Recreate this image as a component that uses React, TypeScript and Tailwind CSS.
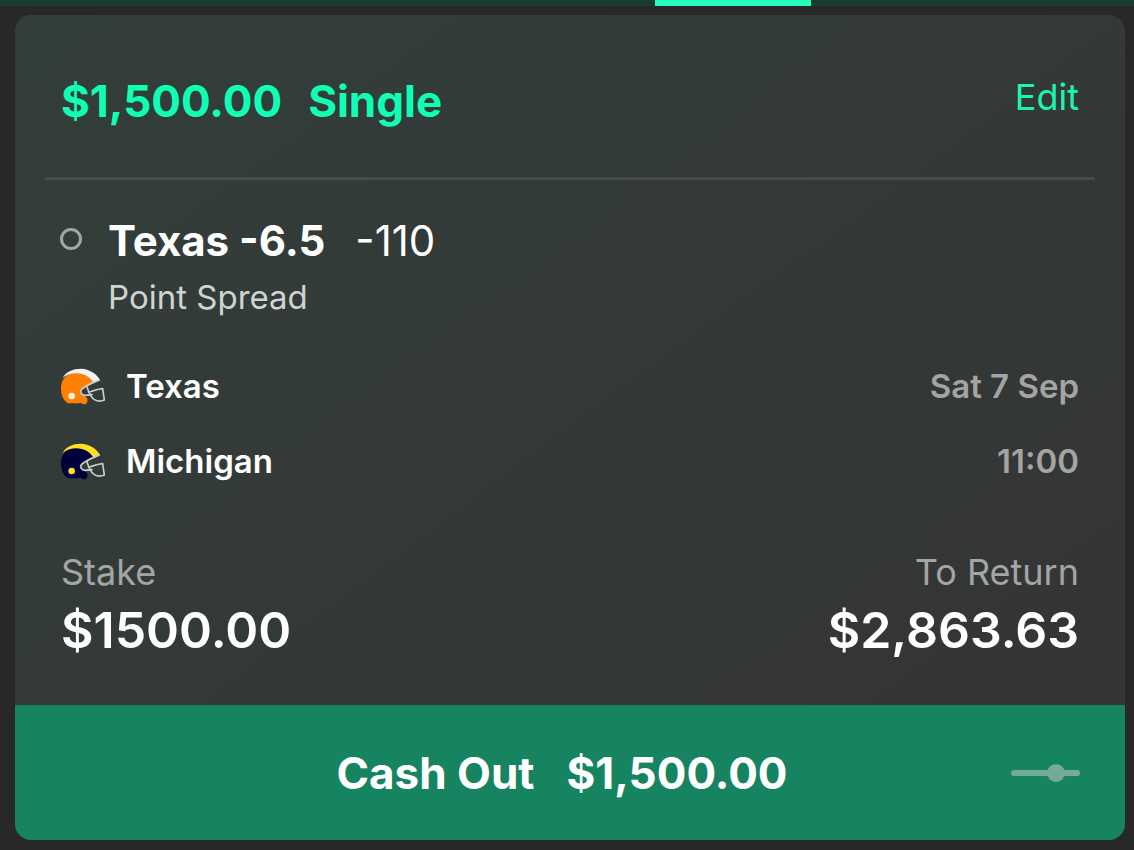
import React from 'react';

interface Team {
  name: string;
  shell: string;
  stripe: string;
  dot: string;
  info: string;
}

const teams: Team[] = [
  { name: 'Texas', shell: '#ff7f00', stripe: '#f4f4f4', dot: '#fff3e0', info: 'Sat 7 Sep' },
  { name: 'Michigan', shell: '#00003c', stripe: '#ffe11f', dot: '#ffe11f', info: '11:00' }
];

const HelmetIcon = ({ shell, stripe, dot }: Pick<Team, 'shell' | 'stripe' | 'dot'>) => (
  <svg className="h-[38px] w-[46px] shrink-0" viewBox="30 24 138 114" fill="none" aria-hidden="true">
    <path
      d="M54 130 C40 122 32 104 33 82 C34 56 52 38 80 38 C104 38 124 50 134 66 C118 76 98 80 91 92 C89 99 94 103 102 107 C112 112 114 118 112 125 C109 134 101 135 95 130 C90 127 84 131 76 130 Z"
      fill={shell}
    />
    <path
      d="M38 54 C48 34 70 26 92 26 C120 27 140 42 150 59 L131 69 C120 50 102 41 80 40 C62 40 48 45 38 54 Z"
      fill={stripe}
    />
    <path
      d="M148 60 C126 69 98 80 92 92 C92 100 98 105 106 106 L126 104 M111 80 C116 98 122 110 132 118 C140 123 152 125 163 120 L158 86 C146 87 130 92 116 97"
      stroke="#c9cdcb"
      strokeWidth="5"
      strokeLinejoin="round"
      strokeLinecap="round"
    />
    <circle cx="65" cy="108" r="10" fill={dot} />
  </svg>
);

const SliderIcon = () => (
  <svg className="h-5 w-[69px]" viewBox="0 0 69 20" fill="#74ac98" aria-hidden="true">
    <rect y="7" width="69" height="6" rx="3" />
    <circle cx="45" cy="10" r="9" />
  </svg>
);

const App = () => {
  return (
    <div className="min-h-screen bg-[#282828] font-['Inter',sans-serif] text-white">
      <div className="grid h-1.5 grid-cols-[655fr_156fr_323fr] bg-[#173c31]">
        <span className="col-start-2 bg-[#26ffbb]" />
      </div>

      <main className="pt-[9px] pr-[9px] pb-2.5 pl-[15px]">
        <article className="overflow-hidden rounded-2xl bg-linear-to-br from-[#323e3b] via-[#333937] to-[#343434]">
          <header className="mx-[30px] flex items-start justify-between border-b-3 border-[#474c4a] px-4 pt-[58px] pb-12">
            <h1 className="flex gap-[26px] text-[44px] leading-[56px] font-bold text-[#0fffb4]">
              <span>$1,500.00</span>
              <span>Single</span>
            </h1>
            <button type="button" className="text-4xl leading-[48px] text-[#1bf5b0]">
              Edit
            </button>
          </header>

          <section className="flex gap-[26px] px-[45px] pt-9">
            <span className="mt-3 size-[22px] rounded-full border-3 border-[#a3a6a5]" />
            <div>
              <h2 className="flex gap-[30px] text-[42px] leading-[50px]">
                <span className="font-bold">Texas -6.5</span>
                <span>-110</span>
              </h2>
              <p className="mt-2 text-[33px] leading-[46px] text-[#d0d3d2]">Point Spread</p>
            </div>
          </section>

          <ul className="pt-[29px] pr-[46px] pl-[45px]">
            {teams.map(({ name, shell, stripe, dot, info }) => (
              <li key={name} className="flex h-[75px] items-center text-[33px] font-semibold">
                <HelmetIcon shell={shell} stripe={stripe} dot={dot} />
                <span className="ml-5">{name}</span>
                <span className="ml-auto text-[#a3a4a4]">{info}</span>
              </li>
            ))}
          </ul>

          <dl className="flex justify-between px-[46px] pt-12 pb-[42px]">
            <div>
              <dt className="text-4xl leading-[50px] text-[#a3a6a5]">Stake</dt>
              <dd className="text-[50px] leading-[66px] font-semibold">$1500.00</dd>
            </div>
            <div className="text-right">
              <dt className="text-4xl leading-[50px] text-[#a3a6a5]">To Return</dt>
              <dd className="text-[50px] leading-[66px] font-semibold">$2,863.63</dd>
            </div>
          </dl>

          <button
            type="button"
            className="grid h-[135px] w-full grid-cols-[1fr_auto_1fr] items-center bg-[#178461] pr-[45px] pl-[29px] text-[44px] font-bold"
          >
            <span className="col-start-2 flex gap-8">
              <span>Cash Out</span>
              <span>$1,500.00</span>
            </span>
            <span className="justify-self-end">
              <SliderIcon />
            </span>
          </button>
        </article>
      </main>
    </div>
  );
};

export default App;
